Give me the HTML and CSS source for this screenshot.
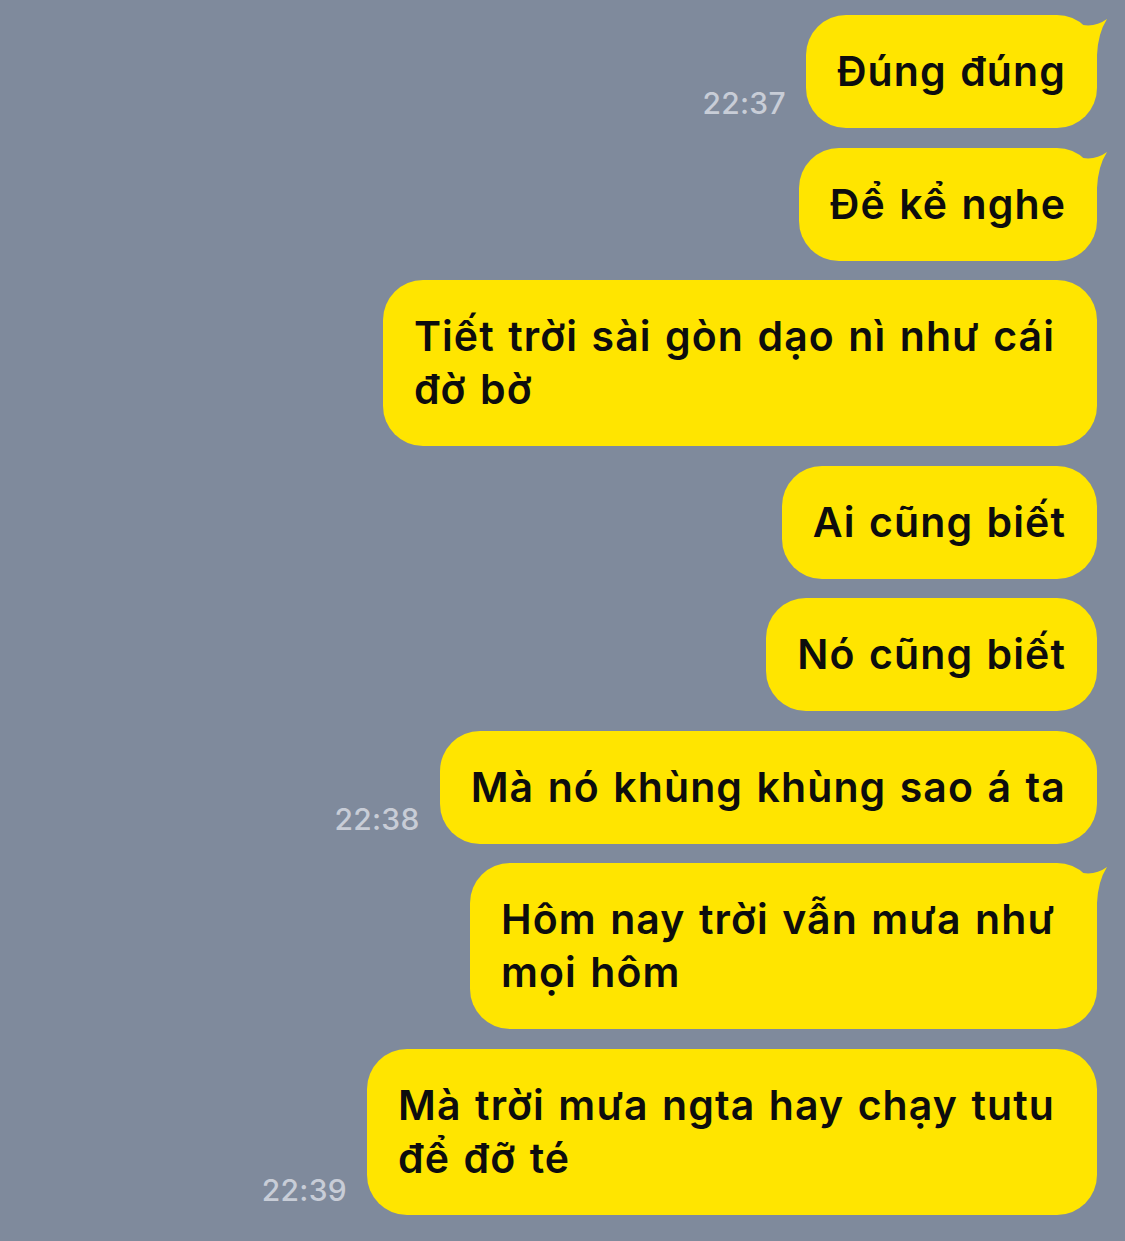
FILE: index.html
```html
<!DOCTYPE html>
<html lang="vi">
<head>
<meta charset="utf-8">
<link rel="stylesheet" href="styles.css">
</head>
<body>
<main class="chat">
  <div class="row">
    <span class="time">22:37</span>
    <div class="bubble tail">Đúng đúng<svg class="tail-svg" viewBox="0 0 28 40" width="28" height="40"><path d="M3 10 Q16 12 27 4 Q18 18 17 40 L3 40 Z"/></svg></div>
  </div>
  <div class="row">
    <div class="bubble tail">Để kể nghe<svg class="tail-svg" viewBox="0 0 28 40" width="28" height="40"><path d="M3 10 Q16 12 27 4 Q18 18 17 40 L3 40 Z"/></svg></div>
  </div>
  <div class="row">
    <div class="bubble multi">Tiết trời sài gòn dạo nì như cái<br>đờ bờ</div>
  </div>
  <div class="row">
    <div class="bubble">Ai cũng biết</div>
  </div>
  <div class="row">
    <div class="bubble">Nó cũng biết</div>
  </div>
  <div class="row">
    <span class="time">22:38</span>
    <div class="bubble">Mà nó khùng khùng sao á ta</div>
  </div>
  <div class="row">
    <div class="bubble multi tail">Hôm nay trời vẫn mưa như<br>mọi hôm<svg class="tail-svg" viewBox="0 0 28 40" width="28" height="40"><path d="M3 10 Q16 12 27 4 Q18 18 17 40 L3 40 Z"/></svg></div>
  </div>
  <div class="row">
    <span class="time">22:39</span>
    <div class="bubble multi">Mà trời mưa ngta hay chạy tutu<br>để đỡ té</div>
  </div>
</main>
</body>
</html>
```

FILE: styles.css
```css
html, body {
  margin: 0;
  padding: 0;
  background: #7f8a9c;
}
.chat {
  display: flex;
  flex-direction: column;
  align-items: flex-end;
  gap: 19.5px;
  padding: 15px 28px 0 0;
  font-family: Inter, "Noto Sans", sans-serif;
}
.row {
  display: flex;
  align-items: flex-end;
  gap: 20px;
}
.time {
  font-size: 30px;
  color: #c8cdd7;
  line-height: 1;
  padding-bottom: 10px;
  font-weight: 500;
  letter-spacing: 0.3px;
}
.bubble {
  position: relative;
  background: #ffe500;
  color: #0d0d0d;
  font-size: 41px;
  font-weight: 600;
  line-height: 53px;
  padding: 30px 31px;
  border-radius: 40px;
  white-space: nowrap;
  letter-spacing: 1.1px;
  word-spacing: 2px;
}
.bubble.multi {
  padding-right: 42px;
}
.tail-svg {
  position: absolute;
  top: 0;
  right: -11px;
  fill: #ffe500;
}
```
